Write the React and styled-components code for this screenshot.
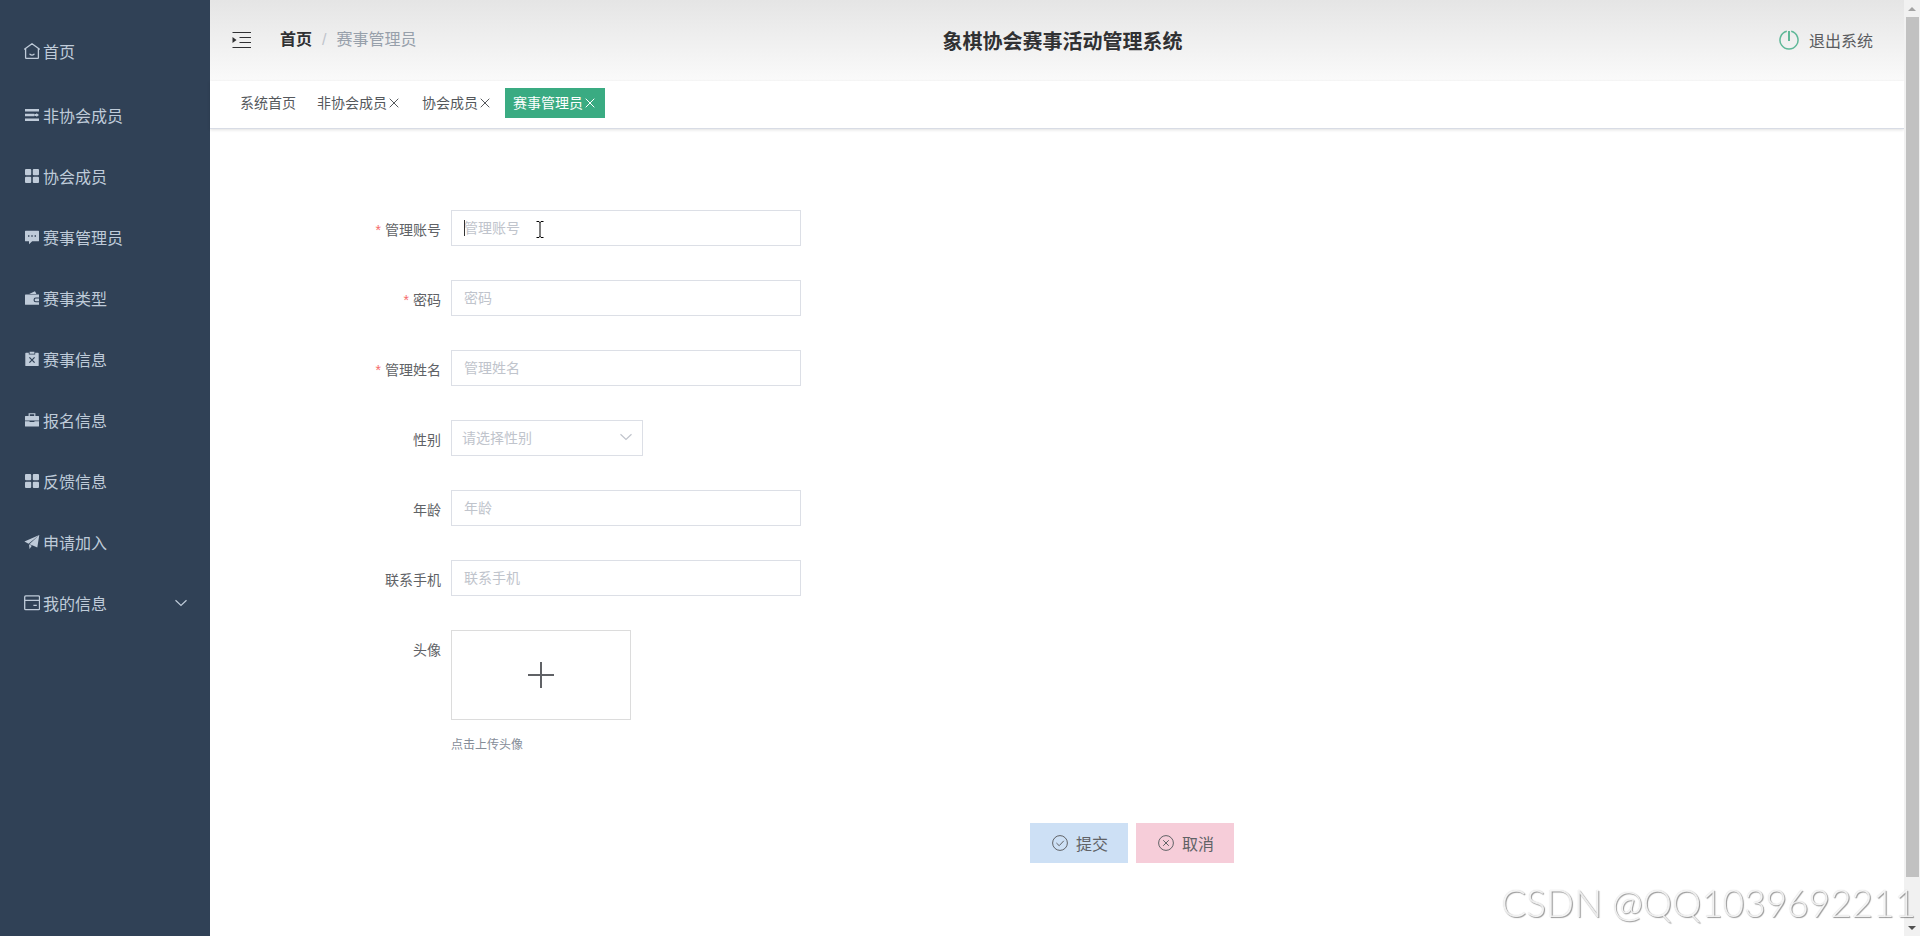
import React from 'react';
import styled, { createGlobalStyle } from 'styled-components';

const GlobalStyle = createGlobalStyle`
  * {
    box-sizing: border-box;
  }

  body {
    margin: 0;
    background: #fff;
    color: #606266;
    font-family: "Liberation Sans", "Noto Sans CJK SC", sans-serif;
    font-size: 14px;
  }

  button, input, select {
    font-family: inherit;
    border-radius: 0;
  }
`;

const Layout = styled.div`
  display: flex;
  min-height: 100vh;
`;

const Sidebar = styled.nav`
  width: 210px;
  flex: none;
  padding-top: 18px;
  background: #304156;
`;

const MenuItem = styled.a`
  display: flex;
  align-items: center;
  gap: 3px;
  height: ${(props) => (props.$home ? '66px' : '61px')};
  padding: 0 22px 0 24px;
  color: #bfcbd9;
  font-size: 16px;
  text-decoration: none;

  .arrow {
    margin-left: auto;
  }
`;

const Main = styled.div`
  flex: 1;
  min-width: 0;
`;

const Header = styled.header`
  display: grid;
  grid-template-columns: 1fr auto 1fr;
  align-items: center;
  height: 81px;
  padding: 0 31px 2px 22px;
  background: linear-gradient(#e5e5e5, #fafafa);
`;

const HeaderLeft = styled.div`
  display: flex;
  align-items: center;
  gap: 28px;
`;

const IconButton = styled.button`
  display: flex;
  padding: 0;
  border: 0;
  background: none;
  color: #303133;
`;

const Breadcrumb = styled.div`
  display: flex;
  gap: 10px;
  color: #97a0ab;
  font-size: 16px;
  line-height: 24px;

  a {
    color: #303133;
    font-weight: 700;
    text-decoration: none;
  }

  .slash {
    color: #c0c4cc;
  }
`;

const Title = styled.h1`
  margin: 0;
  padding: 4px 0 0 20px;
  color: #303133;
  font-size: 20px;
  line-height: 28px;
`;

const Logout = styled.button`
  display: flex;
  align-items: center;
  justify-self: end;
  gap: 10px;
  padding: 0;
  border: 0;
  background: none;
  color: #5a5c60;
  font-size: 16px;
`;

const Tabs = styled.div`
  display: flex;
  gap: 5px;
  height: 48px;
  padding: 7px 22px 0;
  border-bottom: 1px solid #d8dce5;
  box-shadow: 0 1px 3px rgba(0, 0, 0, 0.12);
`;

const Tab = styled.button`
  display: flex;
  align-items: center;
  height: 30px;
  padding: 0 8px 2px;
  border: 0;
  background: ${(props) => (props.$active ? '#3aab82' : 'transparent')};
  color: ${(props) => (props.$active ? '#fff' : '#55585c')};
  font-size: 14px;

  svg {
    margin-top: 2px;
  }
`;

const Form = styled.form`
  padding: 81px 0 30px 150px;
`;

const FormItem = styled.div`
  display: flex;
  align-items: flex-start;
  margin-bottom: 30px;
`;

const Label = styled.label`
  width: 91px;
  padding-right: 10px;
  line-height: 40px;
  text-align: right;

  &::before {
    content: ${(props) => (props.$required ? "'*'" : 'none')};
    margin-right: 4px;
    color: #f56c6c;
  }
`;

const Field = styled.div`
  position: relative;
`;

const Input = styled.input`
  display: block;
  width: 350px;
  height: 36px;
  padding: 0 12px;
  border: 1px solid #dcdfe6;
  outline: 0;
  font-size: 14px;

  &::placeholder {
    color: #c0c4cc;
  }
`;

const Select = styled.select`
  display: block;
  width: 192px;
  height: 36px;
  padding: 0 10px;
  border: 1px solid #dcdfe6;
  background: #fff;
  color: #c0c4cc;
  font-size: 14px;
  appearance: none;
`;

const SelectArrow = styled.span`
  position: absolute;
  top: 10px;
  right: 10px;
  display: flex;
  color: #c0c4cc;
  pointer-events: none;
`;

const Caret = styled.span`
  position: absolute;
  top: 10px;
  left: 13px;
  width: 1px;
  height: 16px;
  background: #333;
`;

const Pointer = styled.svg`
  position: absolute;
  top: 11px;
  left: 85px;
`;

const Upload = styled.button`
  display: flex;
  align-items: center;
  justify-content: center;
  width: 180px;
  height: 90px;
  border: 1px solid #dcdcdc;
  background: #fff;
  color: #606266;
`;

const Tip = styled.div`
  margin-top: 16px;
  color: #858d98;
  font-size: 12px;
  line-height: 18px;
`;

const Actions = styled.div`
  display: flex;
  justify-content: center;
  gap: 8px;
  padding-top: 39px;
`;

const ActionButton = styled.button`
  display: flex;
  align-items: center;
  gap: 8px;
  height: 40px;
  padding: 0 20px 0 22px;
  border: 0;
  background: ${(props) => (props.$cancel ? '#f6cdd9' : '#cde0f5')};
  color: #606266;
  font-size: 16px;
`;

const Scrollbar = styled.div`
  display: flex;
  flex-direction: column;
  align-items: center;
  width: 16px;
  flex: none;
  background: #f1f1f1;
`;

const ScrollEnd = styled.div`
  display: flex;
  align-items: center;
  justify-content: center;
  height: 17px;
  color: ${(props) => (props.$dark ? '#505050' : '#a3a3a3')};
`;

const ScrollTrack = styled.div`
  flex: 1;
  width: 13px;
`;

const ScrollThumb = styled.div`
  height: 860px;
  max-height: 96%;
  background: #c1c1c1;
`;

const Watermark = styled.div`
  position: fixed;
  right: 4px;
  bottom: 10px;
  color: rgba(255, 255, 255, 0.85);
  font-family: Lato, sans-serif;
  font-size: 37px;
  font-weight: 300;
  line-height: 46px;
  text-shadow: 1px 1px 1px rgba(0, 0, 0, 0.4), 0 0 1px rgba(0, 0, 0, 0.25);
  pointer-events: none;
`;

const icons = {
  house: (
    <g fill="none" stroke="currentColor" strokeWidth="1.3" strokeLinejoin="round" strokeLinecap="round">
      <path d="M.7 6.1 8 .7l7.3 5.4M1.6 5.5v9.2q0 .6.6.6h11.6q.6 0 .6-.6V5.5M6 11.2q2 1.7 4 0" />
    </g>
  ),
  operation: (
    <g stroke="currentColor" strokeWidth="2.6">
      <path d="M1 3.3h14M1 8h9.4M1 12.7h14" />
      <path d="M10.4 7h2V6L15 8l-2.6 2V9h-2z" fill="currentColor" stroke="none" />
    </g>
  ),
  grid: (
    <g fill="currentColor">
      <rect x="1" y="1" width="6.2" height="6.2" rx="1" />
      <rect x="8.8" y="1" width="6.2" height="6.2" rx="1" />
      <rect x="1" y="8.8" width="6.2" height="6.2" rx="1" />
      <rect x="8.8" y="8.8" width="6.2" height="6.2" rx="1" />
    </g>
  ),
  comment: (
    <path
      fill="currentColor"
      fillRule="evenodd"
      d="M1.6 1.7h12.8q.6 0 .6.6v9.4q0 .6-.6.6H8.2L5 15.2v-2.9H1.6q-.6 0-.6-.6V2.3q0-.6.6-.6zM4 6.3v1.4h1.4V6.3zm3.3 0v1.4h1.4V6.3zm3.3 0v1.4H12V6.3z"
    />
  ),
  wallet: (
    <g fill="currentColor">
      <path d="m5.2 4 5.2-2.6q.6-.3.9.3L12.4 4z" />
      <path d="M1.6 4.6H15v3h-3.2a2.2 2.2 0 0 0 0 4.6H15v2.6H1.6q-.6 0-.6-.6v-9q0-.6.6-.6z" />
      <path d="M12 8.6h3v2.7h-3a1.35 1.35 0 0 1 0-2.7z" />
    </g>
  ),
  release: (
    <g>
      <path fill="currentColor" d="M2 1.7h2.8v1.8h6.4V1.7H14q.7 0 .7.7v12q0 .7-.7.7H2q-.7 0-.7-.7v-12q0-.7.7-.7zM5.6.8h4.8v2H5.6z" />
      <path stroke="#304156" strokeWidth="1.2" d="m5.4 6.4 5.2 5.2m0-5.2-5.2 5.2" />
    </g>
  ),
  briefcase: (
    <g fill="currentColor">
      <path fillRule="evenodd" d="M4.6 4V1.2h6.8V4h3.1q.5 0 .5.5v3.9H1V4.5q0-.5.5-.5zM5.8 4h4.4V2.3H5.8z" />
      <path d="M1 9.2h4.6v.8h4.8v-.8H15v4.9q0 .5-.5.5h-13q-.5 0-.5-.5z" />
    </g>
  ),
  plane: (
    <g fill="currentColor">
      <path d="M15.3 1 .4 7.6l4.1 2.1zM5.3 10.2 15.3 1l-2 12.4-4.5-2z" />
      <path d="m5 10.6 2.8 1.2L5.6 15z" />
    </g>
  ),
  card: (
    <g fill="none" stroke="currentColor" strokeWidth="1.3">
      <rect x=".7" y=".9" width="14.8" height="13.8" rx="1" />
      <path d="M.7 5.3h14.8M9.4 10.4h3.4" />
    </g>
  ),
};

const Icon = ({ name }) => (
  <svg width="16" height="16" viewBox="0 0 16 16" aria-hidden="true">
    {icons[name]}
  </svg>
);

const ChevronDown = ({ size = 14 }) => (
  <svg className="arrow" width={size} height={size} viewBox="0 0 14 14" fill="none" stroke="currentColor" aria-hidden="true">
    <path d="m1.5 4.3 5.5 5.2 5.5-5.2" strokeWidth="1.2" />
  </svg>
);

const Close = () => (
  <svg width="14" height="14" viewBox="0 0 14 14" stroke="currentColor" aria-hidden="true">
    <path d="m2.7 2.7 8.6 8.6m0-8.6-8.6 8.6" />
  </svg>
);

const menu = [
  { icon: 'house', text: '首页', home: true },
  { icon: 'operation', text: '非协会成员' },
  { icon: 'grid', text: '协会成员' },
  { icon: 'comment', text: '赛事管理员' },
  { icon: 'wallet', text: '赛事类型' },
  { icon: 'release', text: '赛事信息' },
  { icon: 'briefcase', text: '报名信息' },
  { icon: 'grid', text: '反馈信息' },
  { icon: 'plane', text: '申请加入' },
  { icon: 'card', text: '我的信息', sub: true },
];

const tabs = [
  { text: '系统首页', fixed: true },
  { text: '非协会成员' },
  { text: '协会成员' },
  { text: '赛事管理员', active: true },
];

const TextItem = ({ id, label, required, type = 'text', children }) => (
  <FormItem>
    <Label htmlFor={id} $required={required}>{label}</Label>
    <Field>
      <Input id={id} type={type} placeholder={label} />
      {children}
    </Field>
  </FormItem>
);

const App = () => {
  return (
    <>
      <GlobalStyle />
      <Layout>
        <Sidebar>
          {menu.map((item) => (
            <MenuItem key={item.text} href="#" $home={item.home}>
              <Icon name={item.icon} />
              <span>{item.text}</span>
              {item.sub && <ChevronDown />}
            </MenuItem>
          ))}
        </Sidebar>
        <Main>
          <Header>
            <HeaderLeft>
              <IconButton type="button" aria-label="menu">
                <svg width="20" height="20" viewBox="0 0 20 20" fill="none" stroke="currentColor">
                  <path d="M.5 2.5h18.5M7.5 7.5H19M7.5 12.5H19M.5 17.5h18.5" strokeWidth="1.2" />
                  <path d="M.5 7v6l4-3z" fill="currentColor" stroke="none" />
                </svg>
              </IconButton>
              <Breadcrumb>
                <a href="#">首页</a>
                <span className="slash">/</span>
                <span>赛事管理员</span>
              </Breadcrumb>
            </HeaderLeft>
            <Title>象棋协会赛事活动管理系统</Title>
            <Logout type="button">
              <svg width="20" height="20" viewBox="0 0 20 20" fill="none" stroke="#5fb898" strokeWidth="1.5" aria-hidden="true">
                <path d="M7.8 1.3a9 9 0 1 0 4.4 0" />
                <path d="M10 1v10" strokeWidth="2" />
              </svg>
              退出系统
            </Logout>
          </Header>
          <Tabs>
            {tabs.map((tab) => (
              <Tab key={tab.text} type="button" $active={tab.active}>
                {tab.text}
                {!tab.fixed && <Close />}
              </Tab>
            ))}
          </Tabs>
          <Form>
            <TextItem id="account" label="管理账号" required>
              <Caret />
              <Pointer width="8" height="17" viewBox="0 0 8 17" fill="none" stroke="#000" aria-hidden="true">
                <path d="M.5.5h2.5l1 1 1-1h2.5M4 1v15M.5 16.5h2.5l1-1 1 1h2.5" />
              </Pointer>
            </TextItem>
            <TextItem id="password" label="密码" type="password" required />
            <TextItem id="name" label="管理姓名" required />
            <FormItem>
              <Label htmlFor="gender">性别</Label>
              <Field>
                <Select id="gender" defaultValue="">
                  <option value="">请选择性别</option>
                  <option value="男">男</option>
                  <option value="女">女</option>
                </Select>
                <SelectArrow>
                  <ChevronDown />
                </SelectArrow>
              </Field>
            </FormItem>
            <TextItem id="age" label="年龄" />
            <TextItem id="phone" label="联系手机" />
            <FormItem>
              <Label htmlFor="avatar">头像</Label>
              <Field>
                <Upload id="avatar" type="button">
                  <svg width="28" height="28" viewBox="0 0 28 28" stroke="currentColor" strokeWidth="2" aria-hidden="true">
                    <path d="M1 14h26M14 1v26" />
                  </svg>
                </Upload>
                <Tip>点击上传头像</Tip>
              </Field>
            </FormItem>
            <Actions>
              <ActionButton type="button">
                <svg width="16" height="16" viewBox="0 0 16 16" fill="none" stroke="currentColor" aria-hidden="true">
                  <circle cx="8" cy="8" r="7.4" />
                  <path d="m4.4 8 2.8 2.7 4.6-4.9" />
                </svg>
                提交
              </ActionButton>
              <ActionButton type="button" $cancel>
                <svg width="16" height="16" viewBox="0 0 16 16" fill="none" stroke="currentColor" aria-hidden="true">
                  <circle cx="8" cy="8" r="7.4" />
                  <path d="m5.2 5.2 5.6 5.6m0-5.6-5.6 5.6" />
                </svg>
                取消
              </ActionButton>
            </Actions>
          </Form>
        </Main>
        <Scrollbar>
          <ScrollEnd>
            <svg width="8" height="4" viewBox="0 0 8 4"><path d="m0 4 4-4 4 4z" fill="currentColor" /></svg>
          </ScrollEnd>
          <ScrollTrack>
            <ScrollThumb />
          </ScrollTrack>
          <ScrollEnd $dark>
            <svg width="8" height="4" viewBox="0 0 8 4"><path d="m0 0 4 4 4-4z" fill="currentColor" /></svg>
          </ScrollEnd>
        </Scrollbar>
      </Layout>
      <Watermark>CSDN @QQ1039692211</Watermark>
    </>
  );
};

export default App;
